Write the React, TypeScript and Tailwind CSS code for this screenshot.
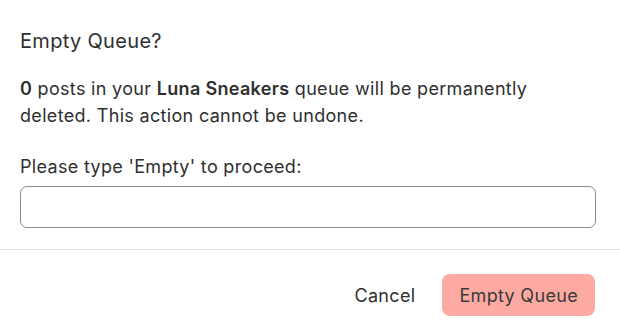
import React, { useState } from "react";

export default function App() {
  const [confirmText, setConfirmText] = useState<string>("");

  return (
    <div className="w-[620px] h-[328px] bg-white text-[#2f2f2f] font-['Inter',sans-serif] tracking-[0.02em] overflow-hidden">
      <div className="px-5 pt-[27px]">
        <div className="text-[20px] leading-[28px]">Empty Queue?</div>
        <p className="mt-[20px] text-[18px] leading-[27px] pr-6">
          <span className="font-semibold">0</span> posts in your{" "}
          <span className="font-semibold">Luna Sneakers</span> queue will be
          permanently deleted. This action cannot be undone.
        </p>
        <label className="block mt-[26px] text-[18px] leading-[24px]">
          Please type 'Empty' to proceed:
        </label>
        <input
          value={confirmText}
          onChange={(e) => setConfirmText(e.target.value)}
          className="mt-[7px] block w-[576px] h-[42px] rounded-[7px] border border-[#8c8c8c] px-3 text-[18px] outline-none"
        />
      </div>
      <div className="mt-[21px] border-t border-[#e3e3e3] flex flex-row justify-end items-center gap-[10px] px-[25px] pt-[24px]">
        <button className="h-[42px] px-[17px] text-[18px] text-[#2f2f2f]">
          Cancel
        </button>
        <button
          disabled={confirmText !== "Empty"}
          className="h-[42px] px-[17px] rounded-[8px] bg-[#fdaaa2] text-[18px] text-[#3a3a3a]"
        >
          Empty Queue
        </button>
      </div>
    </div>
  );
}
